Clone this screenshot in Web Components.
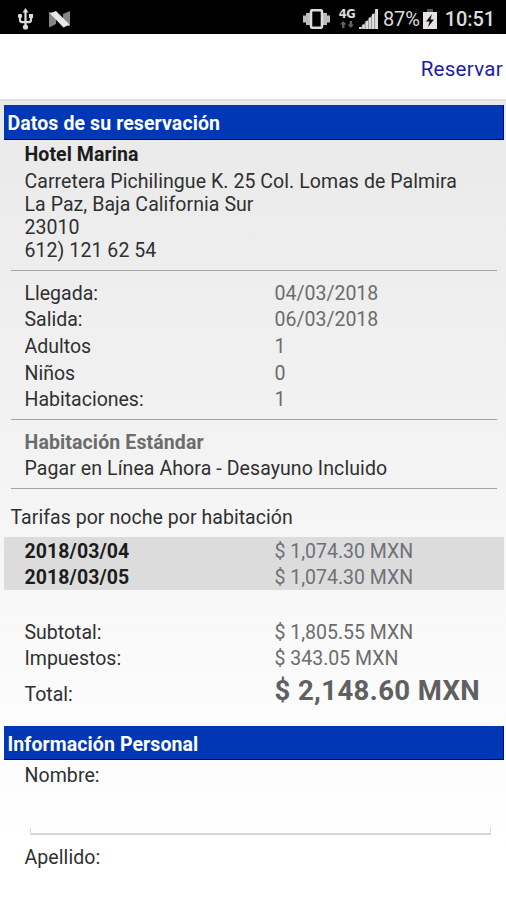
<!DOCTYPE html>
<html lang="es">
<head>
<meta charset="utf-8">
<title>Reservar</title>
<style>
  html, body {
    margin: 0;
    height: 100%;
    overflow: hidden;
  }
  body {
    font-family: Roboto, "Liberation Sans", sans-serif;
    font-size: 19.5px;
    color: #303030;
    background: #fff;
  }
</style>
</head>
<body>
<booking-page>
  <status-bar slot="status" battery="87%" time="10:51"></status-bar>
  <tool-bar slot="toolbar">Reservar</tool-bar>

  <section-title>Datos de su reservación</section-title>
  <hotel-address name="Hotel Marina">
    <div>Carretera Pichilingue K. 25 Col. Lomas de Palmira</div>
    <div>La Paz, Baja California Sur</div>
    <div>23010</div>
    <div>612) 121 62 54</div>
  </hotel-address>
  <line-break></line-break>
  <data-group style="--top: 7.8px; --bottom: 6.7px">
    <data-row label="Llegada:">04/03/2018</data-row>
    <data-row label="Salida:">06/03/2018</data-row>
    <data-row label="Adultos">1</data-row>
    <data-row label="Niños">0</data-row>
    <data-row label="Habitaciones:">1</data-row>
  </data-group>
  <line-break></line-break>
  <data-group style="--top: 8px; --bottom: 6.6px">
    <data-row class="room" label="Habitación Estándar"></data-row>
    <data-row class="plan" label="Pagar en Línea Ahora - Desayuno Incluido"></data-row>
  </data-group>
  <line-break></line-break>
  <rate-table heading="Tarifas por noche por habitación">
    <data-row class="night" label="2018/03/04">$ 1,074.30 MXN</data-row>
    <data-row class="night" label="2018/03/05">$ 1,074.30 MXN</data-row>
  </rate-table>
  <data-group style="--top: 27.6px; --bottom: 13.4px">
    <data-row label="Subtotal:">$ 1,805.55 MXN</data-row>
    <data-row label="Impuestos:">$ 343.05 MXN</data-row>
    <data-row class="total" label="Total:">$ 2,148.60 MXN</data-row>
  </data-group>

  <section-title>Información Personal</section-title>
  <form-field label="Nombre:"></form-field>
  <form-field label="Apellido:"></form-field>
</booking-page>

<script>
class BookingPage extends HTMLElement {
  constructor() {
    super();
    this._shadowRoot = this.attachShadow({ mode: "open" });
    this._shadowRoot.innerHTML = `
      <style>
        :host { display: flex; flex-direction: column; height: 100vh; overflow: hidden; }
        main {
          flex: 1;
          min-height: 0;
          overflow: hidden;
          box-sizing: border-box;
          padding: 4px 2.5px 0 3.5px;
          border-top: 2px solid #dedede;
          background: linear-gradient(#e9e9e9, #f2f2f2 40%, #fbfbfb 74%, #fff 95%);
        }
      </style>
      <slot name="status"></slot>
      <slot name="toolbar"></slot>
      <main><slot></slot></main>`;
  }
}
customElements.define("booking-page", BookingPage);

/**
 * Android status bar
 * Requires battery & time attributes
 *
 * @class StatusBar
 * @extends {HTMLElement}
 */
class StatusBar extends HTMLElement {
  constructor() {
    super();
    this._shadowRoot = this.attachShadow({ mode: "open" });
  }
  connectedCallback() {
    this._shadowRoot.innerHTML = `
      <style>
        :host {
          display: flex;
          flex: none;
          align-items: center;
          height: 34px;
          box-sizing: border-box;
          padding: 3px 11px 0 17px;
          background: #000;
          color: #dcdcdc;
          font-size: 20px;
        }
        svg { display: block; flex: none; }
        .usb { margin-right: 15px; }
        .vibrate { margin-left: auto; margin-right: 9px; }
        .network {
          display: flex;
          flex-direction: column;
          align-items: center;
          width: 16px;
          margin-right: 4px;
          font-family: "DejaVu Sans", sans-serif;
          font-size: 11.5px;
          font-weight: 700;
          letter-spacing: -.5px;
          line-height: 11px;
        }
        .network svg { margin-top: 1px; }
        .signal { margin-right: 5px; }
        .charge { margin: 0 8px 0 3px; }
        .level { letter-spacing: -.1px; }
        .clock { font-weight: 500; letter-spacing: -.1px; }
        span { line-height: 30px; }
      </style>
      <svg class="usb" width="17" height="22" viewBox="0 0 17 22" fill="none" stroke="#dcdcdc" stroke-width="2.2">
        <path d="M8.500 3v16M3 7v5q0 2 2 2.200h7q2-.2 2-2.200V7"/>
        <path d="M8.500 0l3 4.500h-6z" fill="#dcdcdc" stroke="none"/>
        <circle cx="8.500" cy="19" r="2.600" fill="#dcdcdc" stroke="none"/>
        <circle cx="3" cy="8" r="2.200" fill="#dcdcdc" stroke="none"/>
        <path d="M12 6h4v4h-4z" fill="#dcdcdc" stroke="none"/>
      </svg>
      <svg width="21" height="18" viewBox="0 0 21 18">
        <path d="M0 2l7 1v11l-7 3.500zM21 1v15l-7-1V4z" fill="#858585"/>
        <path d="M1 3.500L7 1l13.500 13.500-6 3z" fill="#e8e8e8"/>
      </svg>
      <svg class="vibrate" width="27" height="20" viewBox="0 0 27 20">
        <path d="M0 6.500h3v7H0zM3 4h4v12H3zM24 6.500h3v7h-3zM20 4h4v12h-4z" fill="#bcbcbc"/>
        <rect x="8" y="1.200" width="11" height="17.600" rx="1.500" fill="#000" stroke="#dcdcdc" stroke-width="2.600"/>
      </svg>
      <div class="network">4G
        <svg width="14" height="7" viewBox="0 0 14 7" fill="#626262">
          <path d="M3.200 0l3.200 3.500H4.500V7H2V3.500H0zM10.800 7L7.600 3.500h2V0h2.500v3.500H14z"/>
        </svg>
      </div>
      <svg class="signal" width="19" height="20" viewBox="0 0 19 20" fill="#dcdcdc">
        <path d="M2 18L19 0v20H2z" fill="#777"/>
        <path d="M0 18h2.500v2H0zM3.300 15.500h2.500V20H3.300zM6.500 12h2.500v8H6.500zM9.700 8.500h2.500V20H9.700zM12.900 5h2.500v15h-2.500zM16.100 0H19v20h-2.900z"/>
      </svg>
      <span class="level">${this.getAttribute("battery")}</span>
      <svg class="charge" width="14" height="20" viewBox="0 0 14 20">
        <path d="M4 0h6v3H4z" fill="#555"/>
        <path d="M0 3h14v17H0z" fill="#e4e4e4"/>
        <path d="M9 5L3 12.500h3.500L5 18l6-7.500H7.500z" fill="#111"/>
      </svg>
      <span class="clock">${this.getAttribute("time")}</span>`;
  }
}
customElements.define("status-bar", StatusBar);

/**
 * White bar with the action on the right
 *
 * @class ToolBar
 * @extends {HTMLElement}
 */
class ToolBar extends HTMLElement {
  constructor() {
    super();
    this._shadowRoot = this.attachShadow({ mode: "open" });
    this._shadowRoot.innerHTML = `
      <style>
        :host {
          display: flex;
          flex: none;
          align-items: center;
          justify-content: flex-end;
          height: 65px;
          padding: 4px 3px 0 0;
          box-sizing: border-box;
          background: #fff;
          color: #1c1ca6;
          font-size: 20.5px;
          letter-spacing: .3px;
        }
      </style>
      <slot></slot>`;
  }
}
customElements.define("tool-bar", ToolBar);

/**
 * Blue band over a section
 *
 * @class SectionTitle
 * @extends {HTMLElement}
 */
class SectionTitle extends HTMLElement {
  constructor() {
    super();
    this._shadowRoot = this.attachShadow({ mode: "open" });
    this._shadowRoot.innerHTML = `
      <style>
        :host {
          display: block;
          height: 34.500px;
          padding-left: 4px;
          box-sizing: border-box;
          border: solid #0000a0;
          border-width: 0 1px 1px 0;
          background: #0037b5;
          color: #fff;
          font-weight: 700;
          letter-spacing: .1px;
          line-height: 37.500px;
        }
      </style>
      <slot></slot>`;
  }
}
customElements.define("section-title", SectionTitle);

/**
 * Hotel name and its address lines
 * Requires name attribute
 *
 * @class HotelAddress
 * @extends {HTMLElement}
 */
class HotelAddress extends HTMLElement {
  constructor() {
    super();
    this._shadowRoot = this.attachShadow({ mode: "open" });
  }
  connectedCallback() {
    this._shadowRoot.innerHTML = `
      <style>
        :host { display: block; padding: 1.500px 0 7.100px 21px; line-height: 23.300px; letter-spacing: .07px; }
        .name { color: #1c1c1c; font-weight: 700; line-height: 28.600px; }
      </style>
      <div class="name">${this.getAttribute("name")}</div>
      <slot></slot>`;
  }
}
customElements.define("hotel-address", HotelAddress);

/**
 * Thin grey rule between groups
 *
 * @class LineBreak
 * @extends {HTMLElement}
 */
class LineBreak extends HTMLElement {
  constructor() {
    super();
    this._shadowRoot = this.attachShadow({ mode: "open" });
    this._shadowRoot.innerHTML = `
      <style>
        :host { display: block; height: 1px; margin: 0 6.500px 0 7px; background: #a4a4a4; }
      </style>`;
  }
}
customElements.define("line-break", LineBreak);

/**
 * Stack of rows, spaced with --top & --bottom
 *
 * @class DataGroup
 * @extends {HTMLElement}
 */
class DataGroup extends HTMLElement {
  constructor() {
    super();
    this._shadowRoot = this.attachShadow({ mode: "open" });
    this._shadowRoot.innerHTML = `
      <style>
        :host { display: block; padding: var(--top, 8px) 0 var(--bottom, 6px); }
      </style>
      <slot></slot>`;
  }
}
customElements.define("data-group", DataGroup);

/**
 * Label on the left, value in the second column
 * Requires label attribute
 *
 * @class DataRow
 * @extends {HTMLElement}
 */
class DataRow extends HTMLElement {
  constructor() {
    super();
    this._shadowRoot = this.attachShadow({ mode: "open" });
  }
  connectedCallback() {
    this._shadowRoot.innerHTML = `
      <style>
        :host {
          display: grid;
          grid-template-columns: 250px 1fr;
          height: 26.700px;
          padding-left: 21px;
          line-height: 29.700px;
          white-space: nowrap;
        }
        .value { color: #6c6c6c; }
        :host(.room) .label { color: #6c6c6c; font-weight: 700; letter-spacing: .12px; }
        :host(.plan) .label { letter-spacing: .09px; }
        :host(.night) { line-height: 30.500px; }
        :host(.night) .label { color: #1c1c1c; font-weight: 700; letter-spacing: .08px; }
        :host(.night) .value { color: #707078; }
        :host(.total) { height: 41px; line-height: 43px; }
        :host(.total) .label { padding-top: 2px; }
        :host(.total) .value {
          color: #606060;
          font-size: 27.500px;
          font-weight: 700;
          letter-spacing: .4px;
          line-height: 39.500px;
        }
      </style>
      <div class="label">${this.getAttribute("label")}</div>
      <div class="value"><slot></slot></div>`;
  }
}
customElements.define("data-row", DataRow);

/**
 * Nightly rates on a grey panel
 * Requires heading attribute
 *
 * @class RateTable
 * @extends {HTMLElement}
 */
class RateTable extends HTMLElement {
  constructor() {
    super();
    this._shadowRoot = this.attachShadow({ mode: "open" });
  }
  connectedCallback() {
    this._shadowRoot.innerHTML = `
      <style>
        :host { display: block; padding-top: 15.500px; }
        .heading { padding: 0 0 5.500px 7px; line-height: 27px; letter-spacing: .05px; }
        .nights { background: #dcdcdc; }
      </style>
      <div class="heading">${this.getAttribute("heading")}</div>
      <div class="nights"><slot></slot></div>`;
  }
}
customElements.define("rate-table", RateTable);

/**
 * Text field with the Holo style underline
 * Requires label attribute
 *
 * @class FormField
 * @extends {HTMLElement}
 */
class FormField extends HTMLElement {
  constructor() {
    super();
    this._shadowRoot = this.attachShadow({ mode: "open" });
  }
  connectedCallback() {
    this._shadowRoot.innerHTML = `
      <style>
        :host { display: block; height: 82px; padding-top: 1.500px; box-sizing: border-box; }
        .label { display: block; padding-left: 21px; line-height: 27px; letter-spacing: .08px; }
        .line {
          height: 5px;
          margin: 39px 13px 0 26.500px;
          border: solid #d8d8d8;
          border-width: 0 1px 2px;
        }
      </style>
      <span class="label">${this.getAttribute("label")}</span>
      <div class="line"></div>`;
  }
}
customElements.define("form-field", FormField);
</script>
</body>
</html>
